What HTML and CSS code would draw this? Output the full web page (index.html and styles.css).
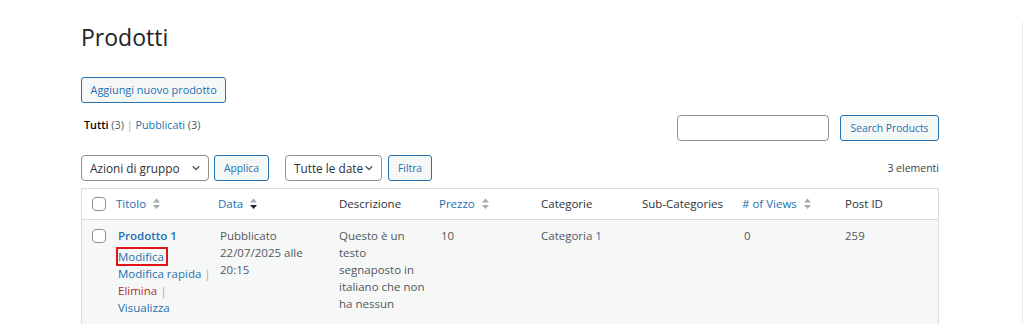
FILE: index.html
```html
<!DOCTYPE html>
<html lang="it">
<head>
<meta charset="utf-8">
<title>Prodotti</title>
<link rel="stylesheet" href="styles.css">
</head>
<body>
<div class="page">
  <div class="wrap">
    <h1 class="title">Prodotti</h1>
    <div class="top-actions">
      <a class="btn btn-add" href="#">Aggiungi nuovo prodotto</a>
    </div>

    <div class="filter-row">
      <ul class="subsubsub">
        <li><b class="current">Tutti</b> <span class="count">(3)</span> <span class="sep">|</span> </li>
        <li><a href="#">Pubblicati</a> <span class="count">(3)</span></li>
      </ul>
      <div class="search-box">
        <input class="search-input" type="search" aria-label="Cerca">
        <button class="btn btn-search" type="button">Search Products</button>
      </div>
    </div>

    <div class="tablenav">
      <div class="fake-select w-bulk">
        <span>Azioni di gruppo</span>
        <svg class="chev" width="8" height="6" viewBox="0 0 8 6"><path d="M0.7 1.2l3.3 3.3l3.3-3.3"/></svg>
      </div>
      <button class="btn btn-apply" type="button">Applica</button>
      <div class="fake-select w-date">
        <span>Tutte le date</span>
        <svg class="chev" width="8" height="6" viewBox="0 0 8 6"><path d="M0.7 1.2l3.3 3.3l3.3-3.3"/></svg>
      </div>
      <button class="btn btn-filter" type="button">Filtra</button>
      <span class="num-items">3 elementi</span>
    </div>

    <table class="list">
      <colgroup>
        <col class="c-cb"><col class="c-title"><col class="c-date"><col class="c-desc"><col class="c-price"><col class="c-cat"><col class="c-sub"><col class="c-views"><col class="c-id">
      </colgroup>
      <thead>
        <tr>
          <th class="cb"><input class="check" type="checkbox" aria-label="Seleziona tutto"></th>
          <th class="sortable"><a href="#">Titolo <svg class="sort" width="7" height="14" viewBox="0 0 7 14"><path class="up" d="M0 5.5L3.5 1.5L7 5.5Z"/><path class="down" d="M0 8L3.5 12L7 8Z"/></svg></a></th>
          <th class="sortable sorted"><a href="#">Data <svg class="sort" width="7" height="14" viewBox="0 0 7 14"><path class="up" d="M0 5.5L3.5 1.5L7 5.5Z"/><path class="down" d="M0 8L3.5 12L7 8Z"/></svg></a></th>
          <th>Descrizione</th>
          <th class="sortable"><a href="#">Prezzo <svg class="sort" width="7" height="14" viewBox="0 0 7 14"><path class="up" d="M0 5.5L3.5 1.5L7 5.5Z"/><path class="down" d="M0 8L3.5 12L7 8Z"/></svg></a></th>
          <th>Categorie</th>
          <th>Sub-Categories</th>
          <th class="sortable"><a href="#"># of Views <svg class="sort" width="7" height="14" viewBox="0 0 7 14"><path class="up" d="M0 5.5L3.5 1.5L7 5.5Z"/><path class="down" d="M0 8L3.5 12L7 8Z"/></svg></a></th>
          <th>Post ID</th>
        </tr>
      </thead>
      <tbody>
        <tr>
          <td class="cb"><input class="check" type="checkbox" aria-label="Seleziona Prodotto 1"></td>
          <td class="col-title">
            <a class="row-title" href="#">Prodotto 1</a>
            <div class="row-actions">
              <div><a href="#" class="highlight">Modifica</a></div>
              <div><a href="#">Modifica rapida</a> <span class="sep">|</span></div>
              <div><a href="#" class="danger">Elimina</a> <span class="sep">|</span></div>
              <div><a href="#">Visualizza</a></div>
            </div>
          </td>
          <td>Pubblicato<br>22/07/2025 alle 20:15</td>
          <td class="col-desc">Questo è un testo segnaposto in italiano che non ha nessun</td>
          <td>10</td>
          <td>Categoria <a href="#">1</a></td>
          <td></td>
          <td>0</td>
          <td>259</td>
        </tr>
      </tbody>
    </table>
  </div>
</div>
</body>
</html>
```

FILE: styles.css
```css
* { box-sizing: border-box; }

html, body {
  margin: 0;
  background: #fff;
}

body {
  font-family: "Open Sans", "Noto Sans", sans-serif;
  font-size: 11.5px;
  color: #3c434a;
}

a { color: #2271b1; text-decoration: none; }

.page {
  width: 1023px;
  min-height: 324px;
  border-right: 1px solid #ececec;
  padding-left: 81px;
}

.wrap { width: 858px; }

.title {
  margin: 22px 0 0;
  font-size: 23px;
  font-weight: 400;
  line-height: 30px;
  color: #1d2327;
}

.top-actions {
  margin-top: 25px;
  display: flex;
}

.btn {
  display: inline-flex;
  align-items: center;
  height: 26px;
  margin: 0;
  padding: 0 9px;
  border: 1px solid #2271b1;
  border-radius: 3px;
  background: #f6f7f7;
  color: #2271b1;
  font-family: inherit;
  font-size: 10.3px;
  line-height: 1;
  white-space: nowrap;
}

.btn-add { font-size: 10.9px; padding: 0 8.5px; }
.btn-search { padding: 0 9.5px; }

.filter-row {
  margin-top: 12px;
  display: flex;
  justify-content: space-between;
  align-items: flex-start;
}

.subsubsub {
  list-style: none;
  margin: 1px 0 0 3px;
  padding: 0;
  display: flex;
  font-size: 10.8px;
  line-height: 18px;
  color: #646970;
  white-space: pre;
}

.subsubsub .current { color: #000; font-weight: 600; }
.subsubsub .count { color: #50575e; }
.subsubsub .sep { color: #a7aaad; }

.search-box {
  display: flex;
  gap: 11px;
}

.search-input {
  width: 152px;
  height: 26px;
  margin: 0;
  border: 1px solid #8c8f94;
  border-radius: 4px;
  background: #fff;
}

.tablenav {
  margin-top: 14px;
  height: 26px;
  display: flex;
  align-items: center;
}

.fake-select {
  height: 26px;
  display: flex;
  align-items: center;
  justify-content: space-between;
  padding: 0 8px;
  border: 1px solid #8c8f94;
  border-radius: 4px;
  background: #fff;
  color: #2c3338;
  font-size: 11.8px;
  white-space: nowrap;
}

.w-bulk { width: 128px; }
.w-date { width: 97px; padding-right: 8px; margin-left: 16px; }

.chev { flex: none; }

.chev path {
  fill: none;
  stroke: #50575e;
  stroke-width: 1.3;
}

.btn-apply { margin-left: 5px; }
.btn-filter { margin-left: 6px; }

.num-items {
  margin-left: auto;
  font-size: 10.5px;
  color: #3c434a;
}

.list {
  margin-top: 7px;
  width: 858px;
  table-layout: fixed;
  border-collapse: separate;
  border-spacing: 0;
  border: 1px solid #dcdcde;
  box-shadow: 0 1px 1px rgba(0, 0, 0, .04);
}

.c-cb { width: 26px; }
.c-title { width: 102px; }
.c-date { width: 119px; }
.c-desc { width: 102px; }
.c-price { width: 100px; }
.c-cat { width: 101px; }
.c-sub { width: 102px; }
.c-views { width: 101px; }
.c-id { width: 103px; }

.list th {
  padding: 6px 10px;
  line-height: 18px;
  font-weight: 400;
  text-align: left;
  color: #2c3338;
  background: #fff;
  border-bottom: 1px solid #dcdcde;
  white-space: nowrap;
  vertical-align: middle;
}

.list th.sortable { padding-left: 8px; padding-right: 8px; }

.list th.sortable a {
  display: inline-flex;
  align-items: center;
  gap: 4px;
  white-space: pre;
}

.sort path { fill: #a7aaad; }
.sorted .sort .down { fill: #1d2327; }

.list th.cb { padding: 0 0 0 10px; }

.check {
  appearance: none;
  -webkit-appearance: none;
  display: block;
  width: 14px;
  height: 14px;
  margin: 0;
  border: 1px solid #8c8f94;
  border-radius: 4px;
  background: #fff;
}

.list td {
  padding: 7px 10px 8px;
  line-height: 17px;
  vertical-align: top;
  color: #50575e;
  background: #f6f7f7;
}

.list td.cb { padding: 9px 0 0 10px; }
.list td.col-desc { padding-right: 4px; }

.row-title {
  font-weight: 600;
  font-size: 11.5px;
}

.row-actions {
  padding-top: 4px;
  white-space: nowrap;
}

.row-actions .sep { color: #a7aaad; }
.row-actions .danger { color: #b32d2e; }

.highlight {
  outline: 2px solid #e3151a;
  padding-right: 2px;
}
```
